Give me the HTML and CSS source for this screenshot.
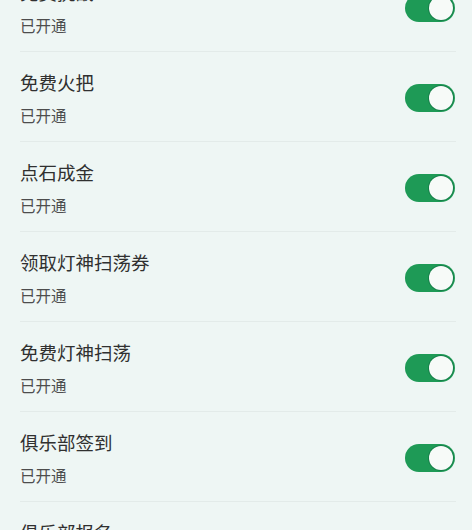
FILE: index.html
```html
<!DOCTYPE html>
<html lang="zh">
<head>
<meta charset="utf-8">
<link rel="stylesheet" href="styles.css">
</head>
<body>
<div class="list">
  <div class="row"><div class="texts"><div class="title">免费挑战</div><div class="sub">已开通</div></div><div class="switch"><span class="knob"></span></div></div>
  <div class="row"><div class="texts"><div class="title">免费火把</div><div class="sub">已开通</div></div><div class="switch"><span class="knob"></span></div></div>
  <div class="row"><div class="texts"><div class="title">点石成金</div><div class="sub">已开通</div></div><div class="switch"><span class="knob"></span></div></div>
  <div class="row"><div class="texts"><div class="title">领取灯神扫荡券</div><div class="sub">已开通</div></div><div class="switch"><span class="knob"></span></div></div>
  <div class="row"><div class="texts"><div class="title">免费灯神扫荡</div><div class="sub">已开通</div></div><div class="switch"><span class="knob"></span></div></div>
  <div class="row"><div class="texts"><div class="title">俱乐部签到</div><div class="sub">已开通</div></div><div class="switch"><span class="knob"></span></div></div>
  <div class="row"><div class="texts"><div class="title">俱乐部报名</div><div class="sub">已开通</div></div><div class="switch"><span class="knob"></span></div></div>
</div>
</body>
</html>
```
FILE: styles.css
```css
html, body {
  margin: 0;
  padding: 0;
  background: #eef6f4;
  overflow: hidden;
  height: 530px;
}
body {
  font-family: "Noto Sans CJK SC", "Noto Sans", sans-serif;
}
.list {
  margin-top: -38px;
  padding: 0 16px 0 20px;
}
.row {
  height: 90px;
  box-sizing: border-box;
  display: flex;
  align-items: center;
  justify-content: space-between;
  border-bottom: 1px solid #e3ebe9;
}
.texts {
  display: flex;
  flex-direction: column;
  gap: 10px;
}
.title {
  font-size: 18.5px;
  line-height: 26px;
  color: #303030;
}
.sub {
  font-size: 15.5px;
  line-height: 20px;
  color: #4d4d4d;
}
.switch {
  width: 50px;
  height: 28px;
  border-radius: 14px;
  background: #1e9a56;
  display: flex;
  align-items: center;
  justify-content: flex-end;
  padding: 0 2px;
  box-sizing: border-box;
  margin-right: 1px;
  margin-top: 2px;
}
.knob {
  width: 24px;
  height: 24px;
  border-radius: 50%;
  background: #f7faf8;
  box-shadow: 0 0 0 1px #16804a;
}
```
